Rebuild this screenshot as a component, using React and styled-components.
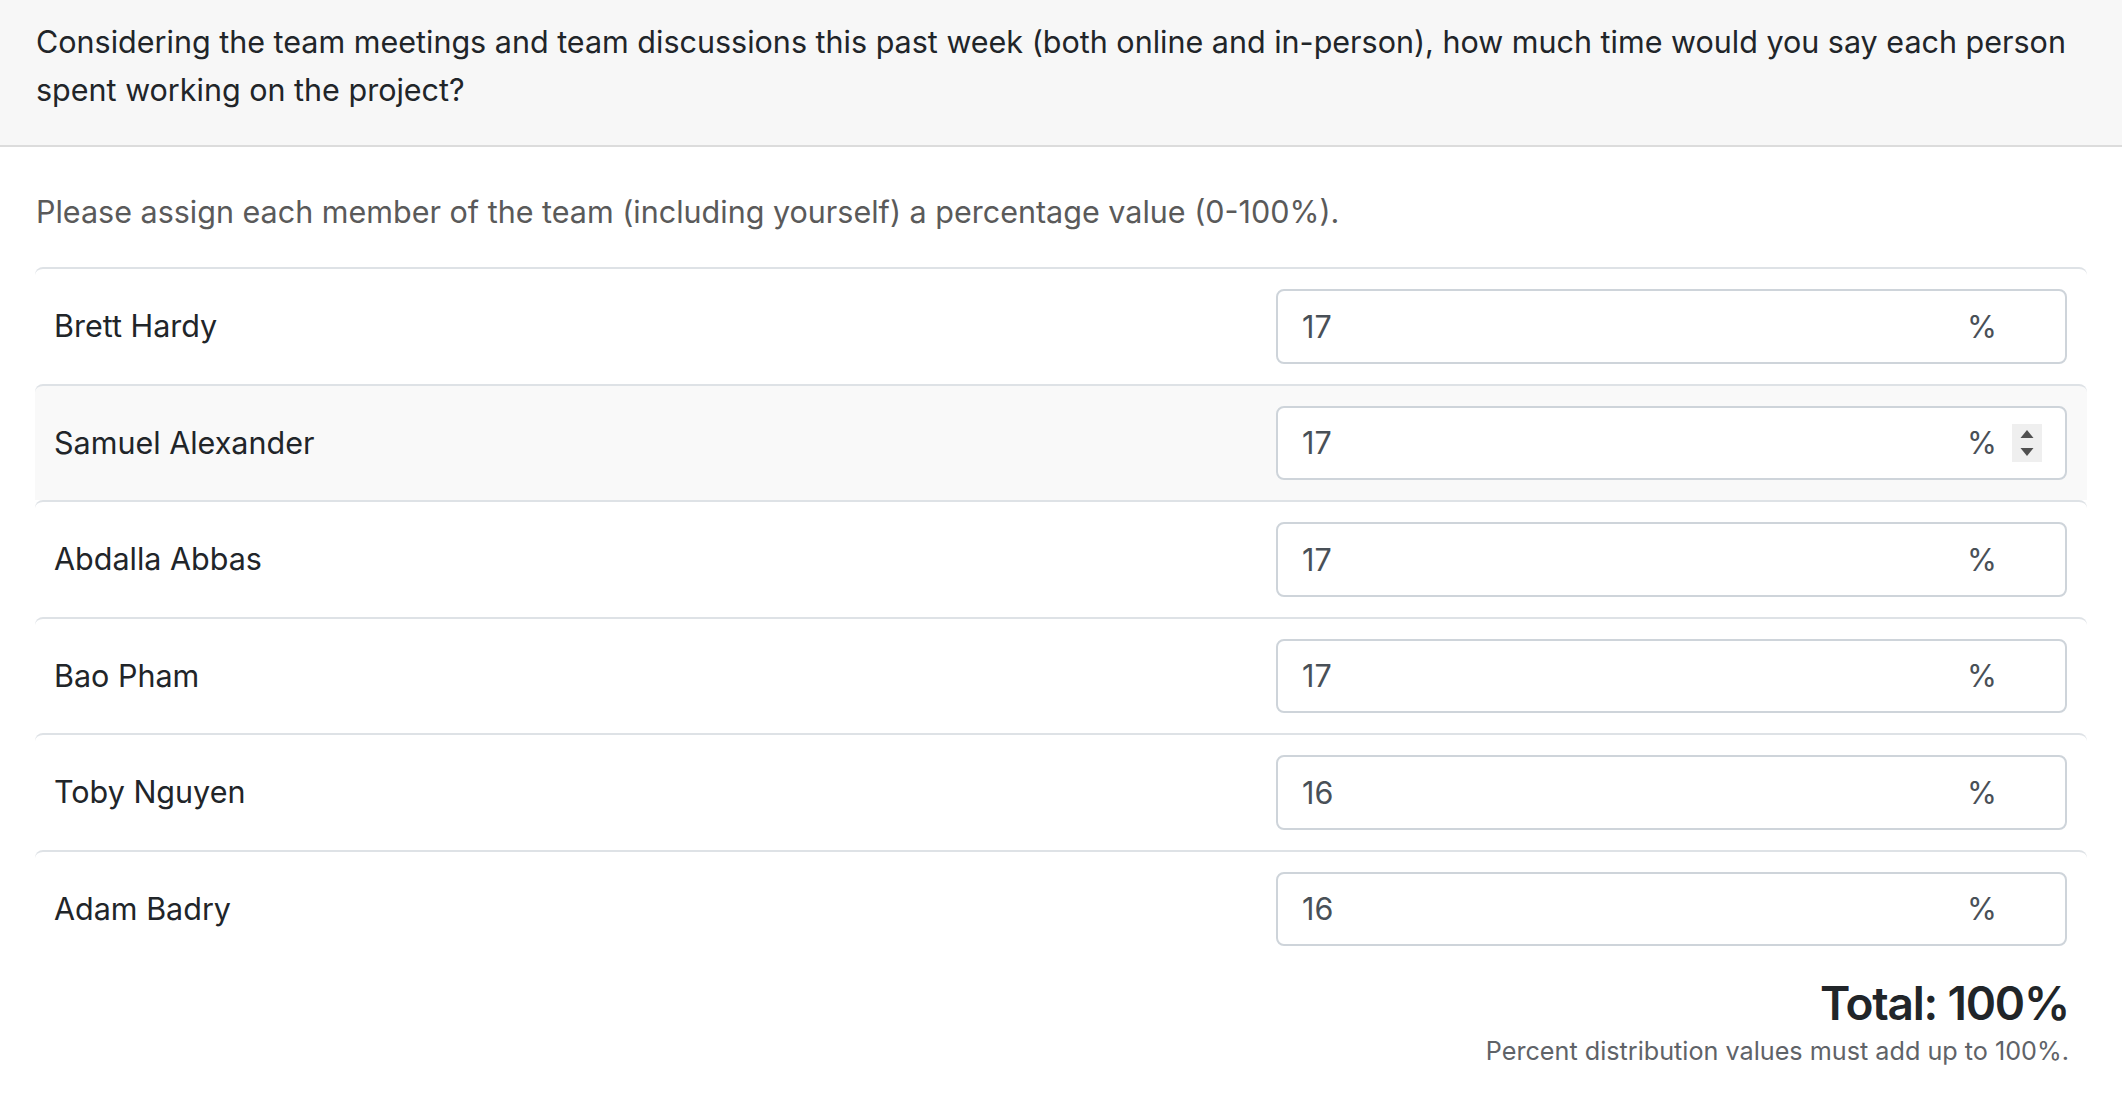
import React from 'react';
import styled, { createGlobalStyle } from 'styled-components';

const GlobalStyle = createGlobalStyle`
  html, body {
    margin: 0;
    padding: 0;
    background: #fff;
  }
  body {
    font-family: Inter, "Liberation Sans", Arial, sans-serif;
    color: #212529;
    -webkit-font-smoothing: antialiased;
  }
`;

const members = [
  { name: 'Brett Hardy', value: 17 },
  { name: 'Samuel Alexander', value: 17, hover: true },
  { name: 'Abdalla Abbas', value: 17 },
  { name: 'Bao Pham', value: 17 },
  { name: 'Toby Nguyen', value: 16 },
  { name: 'Adam Badry', value: 16 },
];

const App = () => {
  const total = members.reduce((sum, m) => sum + m.value, 0);

  return (
    <>
      <GlobalStyle />
      <Card>
        <CardHeader>
          Considering the team meetings and team discussions this past week (both online and
          in-person), how much time would you say each person spent working on the project?
        </CardHeader>
        <CardBody>
          <Hint>Please assign each member of the team (including yourself) a percentage value (0-100%).</Hint>
          <List>
            {members.map((m) => (
              <Row key={m.name} $hover={m.hover}>
                <Name>{m.name}</Name>
                <InputBox>
                  <Value>{m.value}</Value>
                  <Suffix>%</Suffix>
                  <Spinner $visible={m.hover}>
                    <svg width="30" height="38" viewBox="0 0 30 38">
                      <path d="M15 6 L21.5 14 L8.5 14 Z" fill="#505050" />
                      <path d="M15 32 L21.5 24 L8.5 24 Z" fill="#505050" />
                    </svg>
                  </Spinner>
                </InputBox>
              </Row>
            ))}
          </List>
          <Footer>
            <Total>Total: {total}%</Total>
            <Note>Percent distribution values must add up to 100%.</Note>
          </Footer>
        </CardBody>
      </Card>
    </>
  );
};

export default App;

const Card = styled.div`
  width: 100%;
`;

const CardHeader = styled.div`
  background: #f7f7f7;
  border-bottom: 2px solid #dcdcdc;
  padding: 18px 36px 31px;
  font-size: 30.5px;
  line-height: 48px;
  color: #212529;
`;

const CardBody = styled.div`
  padding: 41px 35px 0;
`;

const Hint = styled.p`
  margin: 0 0 31px 1px;
  font-size: 30.5px;
  line-height: 48px;
  color: #5a5a5a;
`;

const List = styled.div`
  display: flex;
  flex-direction: column;
`;

const Row = styled.div`
  display: grid;
  grid-template-columns: 1fr 791px;
  align-items: center;
  padding: 20px 20px 20px 19px;
  border-top: 2px solid #dee2e6;
  border-radius: 8px 8px 0 0;
  background: ${(p) => (p.$hover ? '#f9f9f9' : '#fff')};
`;

const Name = styled.div`
  font-size: 30.5px;
  line-height: 48px;
  color: #212529;
`;

const InputBox = styled.div`
  display: flex;
  align-items: center;
  height: 74.5px;
  box-sizing: border-box;
  border: 2px solid #ced4da;
  border-radius: 8px;
  background: #fff;
  padding: 0 23px 0 24px;
`;

const Value = styled.div`
  flex: 1;
  font-size: 30.5px;
  color: #495057;
`;

const Suffix = styled.span`
  font-size: 30.5px;
  color: #495057;
`;

const Spinner = styled.span`
  display: flex;
  width: 30px;
  height: 38px;
  margin-left: 15px;
  background: ${(p) => (p.$visible ? '#efefef' : 'transparent')};
  visibility: ${(p) => (p.$visible ? 'visible' : 'hidden')};
`;

const Footer = styled.div`
  display: flex;
  flex-direction: column;
  align-items: flex-end;
  padding: 8px 18px 30px 0;
`;

const Total = styled.div`
  font-size: 46px;
  font-weight: 600;
  line-height: 58px;
  letter-spacing: -1.2px;
  color: #212529;
`;

const Note = styled.div`
  font-size: 25.2px;
  line-height: 38px;
  color: #5f6368;
`;
